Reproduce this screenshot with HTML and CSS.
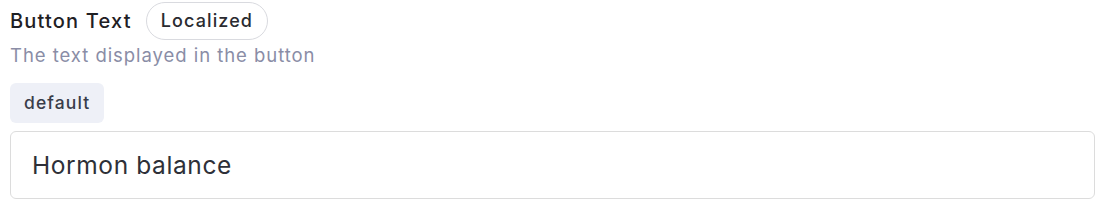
FILE: index.html
```html
<!DOCTYPE html>
<html>
  <head>
    <meta charset="UTF-8" />
    <title>Button Text</title>
    <link rel="stylesheet" href="styles.css">
  </head>
  <body>
    <div class="field">
      <div class="field-head">
        <span class="label">Button Text</span>
        <span class="badge">Localized</span>
      </div>
      <div class="hint">The text displayed in the button</div>
      <div class="chip">default</div>
      <input class="in" type="text" value="Hormon balance">
    </div>
  </body>
</html>
```

FILE: styles.css
```css
* {
  font-family: Inter, "Noto Sans", sans-serif;
  box-sizing: border-box;
}
html {
  background-color: #FFFFFF;
}
body {
  margin: 0;
  padding: 2px 5px 0 10px;
}
.field {
  display: flex;
  flex-direction: column;
  align-items: flex-start;
}
.field-head {
  display: flex;
  align-items: center;
  gap: 14px;
}
.label {
  font-size: 20px;
  letter-spacing: 1.2px;
  font-weight: 500;
  color: #1F2024;
}
.badge {
  height: 38px;
  line-height: 36px;
  padding: 0 14px;
  border: 1px solid #D9DADF;
  border-radius: 19px;
  font-size: 18px;
  letter-spacing: 1.1px;
  font-weight: 500;
  color: #2A2B30;
}
.hint {
  margin-top: 3px;
  font-size: 18.5px;
  letter-spacing: 0.95px;
  line-height: 24px;
  color: #8A8DA6;
}
.chip {
  margin-top: 16px;
  height: 40px;
  line-height: 40px;
  padding: 0 14px;
  border-radius: 6px;
  background: #EEF0F7;
  font-size: 17.5px;
  letter-spacing: 1.1px;
  font-weight: 500;
  color: #3A3D4A;
}
.in {
  margin-top: 8px;
  width: 100%;
  height: 68px;
  padding: 0 21px;
  border: 1px solid #DCDCDC;
  border-radius: 6px;
  font-size: 24.5px;
  letter-spacing: 0.6px;
  color: #2E3038;
  outline: none;
}
```
